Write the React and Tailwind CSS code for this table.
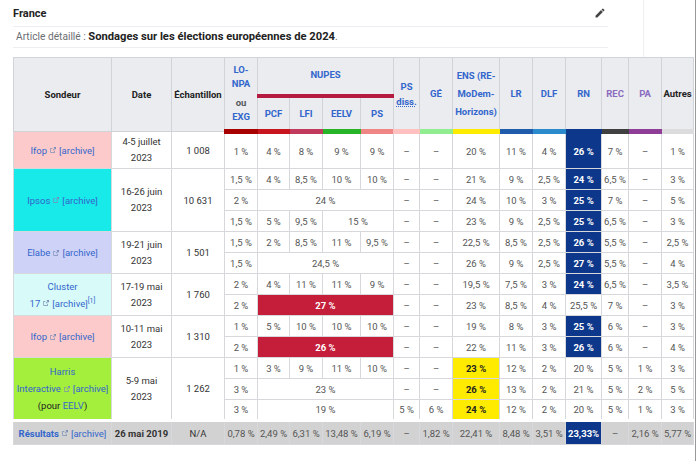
import React from 'react';

// Sondages européennes 2024 — tableau façon Wikipédia mobile

const widths = [98, 60, 53, 33, 32, 33, 38, 33, 26, 33, 47, 33, 33, 36, 27, 33, 32];

const kinds = {
    rn: 'bg-[#0d378a] text-white font-bold',
    nup: 'bg-[#c41e3a] text-white font-bold',
    ens: 'bg-[#ffeb00] text-[#222] font-bold',
};

function ExtIcon() {
    return (
        <svg viewBox="0 0 12 12" className="inline-block w-[8px] h-[8px] mx-[2px] align-[-0.5px] text-[#7a8db8]">
            <path d="M2 3h3v1H3v5h5V7h1v3H2z" fill="currentColor" />
            <path d="M6.5 1.5H10.5V5.5L9.2 4.2 6.5 6.9 5.6 6 8.3 3.3z" fill="currentColor" />
        </svg>
    );
}

function Source({ name, bold }) {
    return (
        <span className="whitespace-nowrap">
            <span className={bold ? 'font-bold text-[#3366cc]' : 'text-[#3366cc]'}>{name}</span>
            <ExtIcon />
            <span className="text-[#3366cc]">[archive]</span>
        </span>
    );
}

function Row({ vals }) {
    return vals.map((c, i) => {
        const o = typeof c === 'string' ? { v: c } : c;
        return (
            <td
                key={i}
                colSpan={o.span || 1}
                className={`border border-[#d6d8db] text-center px-[1px] whitespace-nowrap ${o.k ? kinds[o.k] : 'text-[#555]'}`}
            >
                {o.v}
            </td>
        );
    });
}

const polls = [
    {
        src: <Source name="Ifop" />,
        bg: 'bg-[#fccaca]',
        date: ['4-5 juillet', '2023'],
        n: '1 008',
        tall: true,
        rows: [['1 %', '4 %', '8 %', '9 %', '9 %', '–', '–', '20 %', '11 %', '4 %', { v: '26 %', k: 'rn' }, '7 %', '–', '1 %']],
    },
    {
        src: <Source name="Ipsos" />,
        bg: 'bg-[#18e9e9]',
        date: ['16-26 juin', '2023'],
        n: '10 631',
        rows: [
            ['1,5 %', '4 %', '8,5 %', '10 %', '10 %', '–', '–', '21 %', '9 %', '2,5 %', { v: '24 %', k: 'rn' }, '6,5 %', '–', '3 %'],
            ['2 %', { v: '24 %', span: 4 }, '–', '–', '24 %', '10 %', '3 %', { v: '25 %', k: 'rn' }, '7 %', '–', '5 %'],
            ['1,5 %', '5 %', '9,5 %', { v: '15 %', span: 2 }, '–', '–', '23 %', '9 %', '2,5 %', { v: '25 %', k: 'rn' }, '6,5 %', '–', '3 %'],
        ],
    },
    {
        src: <Source name="Elabe" />,
        bg: 'bg-[#cfd2f7]',
        date: ['19-21 juin', '2023'],
        n: '1 501',
        rows: [
            ['1,5 %', '2 %', '8,5 %', '11 %', '9,5 %', '–', '–', '22,5 %', '8,5 %', '2,5 %', { v: '26 %', k: 'rn' }, '5,5 %', '–', '2,5 %'],
            ['1,5 %', { v: '24,5 %', span: 4 }, '–', '–', '26 %', '9 %', '2,5 %', { v: '27 %', k: 'rn' }, '5,5 %', '–', '4 %'],
        ],
    },
    {
        src: (
            <>
                <span className="text-[#3366cc]">Cluster</span>
                <br />
                <span className="whitespace-nowrap">
                    <span className="text-[#3366cc]">17</span>
                    <ExtIcon />
                    <span className="text-[#3366cc]">[archive]</span>
                    <sup className="text-[7px] text-[#3366cc]">[1]</sup>
                </span>
            </>
        ),
        bg: 'bg-[#d8fbf9]',
        date: ['17-19 mai', '2023'],
        n: '1 760',
        rows: [
            ['2 %', '4 %', '11 %', '11 %', '9 %', '–', '–', '19,5 %', '7,5 %', '3 %', { v: '24 %', k: 'rn' }, '6,5 %', '–', '3,5 %'],
            ['2 %', { v: '27 %', span: 4, k: 'nup' }, '–', '–', '23 %', '8,5 %', '4 %', '25,5 %', '7 %', '–', '3 %'],
        ],
    },
    {
        src: <Source name="Ifop" />,
        bg: 'bg-[#fccaca]',
        date: ['10-11 mai', '2023'],
        n: '1 310',
        rows: [
            ['1 %', '5 %', '10 %', '10 %', '10 %', '–', '–', '19 %', '8 %', '3 %', { v: '25 %', k: 'rn' }, '6 %', '–', '3 %'],
            ['2 %', { v: '26 %', span: 4, k: 'nup' }, '–', '–', '22 %', '11 %', '3 %', { v: '26 %', k: 'rn' }, '6 %', '–', '4 %'],
        ],
    },
    {
        src: (
            <>
                <span className="text-[#3366cc]">Harris</span>
                <br />
                <span className="whitespace-nowrap">
                    <span className="text-[#3366cc]">Interactive</span>
                    <ExtIcon />
                    <span className="text-[#3366cc]">[archive]</span>
                </span>
                <br />
                (pour <span className="text-[#3366cc]">EELV</span>)
            </>
        ),
        bg: 'bg-[#a4ef3c]',
        date: ['5-9 mai', '2023'],
        n: '1 262',
        rows: [
            ['1 %', '3 %', '9 %', '11 %', '10 %', '–', '–', { v: '23 %', k: 'ens' }, '12 %', '2 %', '20 %', '5 %', '1 %', '3 %'],
            ['3 %', { v: '23 %', span: 4 }, '–', '–', { v: '26 %', k: 'ens' }, '13 %', '2 %', '21 %', '5 %', '2 %', '5 %'],
            ['3 %', { v: '19 %', span: 4 }, '5 %', '6 %', { v: '24 %', k: 'ens' }, '12 %', '2 %', '20 %', '5 %', '1 %', '3 %'],
        ],
    },
];

const results = ['0,78 %', '2,49 %', '6,31 %', '13,48 %', '6,19 %', '–', '1,82 %', '22,41 %', '8,48 %', '3,51 %', { v: '23,33%', k: 'rn' }, '–', '2,16 %', '5,77 %'];

const th = 'border border-[#d0d3d7] bg-[#eaecf0] font-bold px-[1px] text-center';

export default function App() {
    return (
        <div className="w-[696px] h-[461px] overflow-hidden bg-white border-r border-[#9a9a9a] font-['Roboto','Liberation_Sans',sans-serif] text-[#222] pl-[13px]">
            {/* --- entête section --- */}
            <div className="flex h-[57px]">
                <div className="w-[595px]">
                    <div className="h-[27px] border-b border-[#eceef1] flex items-center justify-between pt-[2px]">
                        <h2 className="text-[11px] font-bold leading-[14px]">France</h2>
                        <svg viewBox="0 0 24 24" className="w-[12px] h-[12px] mr-[2px] mb-[2px] text-[#444]">
                            <path fill="currentColor" d="M3 17.25V21h3.75L17.81 9.94l-3.75-3.75L3 17.25zM20.71 7.04a1 1 0 0 0 0-1.41l-2.34-2.34a1 1 0 0 0-1.41 0l-1.83 1.83 3.75 3.75 1.83-1.83z" />
                        </svg>
                    </div>
                    <div className="h-[21px] border-b border-[#eceef1] pl-[3px] text-[10.2px] leading-[20px] text-[#6a6e72]">
                        Article détaillé : <span className="font-bold text-[11.2px] text-[#222]">Sondages sur les élections européennes de 2024</span>.
                    </div>
                </div>
                <div className="w-[35px]" />
                <div className="border-l border-[#f0f0f0]" />
            </div>

            {/* --- tableau --- */}
            <table className="table-fixed border-collapse w-[680px] text-[9.5px] leading-[15px]">
                <colgroup>
                    {widths.map((w, i) => (
                        <col key={i} style={{ width: w }} />
                    ))}
                </colgroup>
                <thead>
                    <tr className="h-[38px]">
                        <th rowSpan={2} className={th}>Sondeur</th>
                        <th rowSpan={2} className={th}>Date</th>
                        <th rowSpan={2} className={th}>Échantillon</th>
                        <th rowSpan={2} className={`${th} border-b-[5px] border-b-[#a80000] leading-[14px]`}>
                            <div className="text-[#3366cc]">LO-<br />NPA</div>
                            <div className="mt-[5px] text-[#54595d]">ou</div>
                            <div className="text-[#3366cc]">EXG</div>
                        </th>
                        <th colSpan={4} className={`${th} border-b-[4px] border-b-[#b51a40] text-[#3366cc] pb-[3px]`}>NUPES</th>
                        <th rowSpan={2} className={`${th} border-b-[5px] border-b-[#ffc0c0] text-[#3366cc]`}>
                            PS<br />
                            <span className="underline decoration-dotted">diss.</span>
                        </th>
                        <th rowSpan={2} className={`${th} border-b-[5px] border-b-[#90ee90] text-[#3366cc]`}>GÉ</th>
                        <th rowSpan={2} className={`${th} border-b-[5px] border-b-[#ffeb00] text-[#3366cc] leading-[18px]`}>
                            ENS (RE-<br />MoDem-<br />Horizons)
                        </th>
                        <th rowSpan={2} className={`${th} border-b-[5px] border-b-[#1f5cab] text-[#3366cc]`}>LR</th>
                        <th rowSpan={2} className={`${th} border-b-[5px] border-b-[#2a8acb] text-[#3366cc]`}>DLF</th>
                        <th rowSpan={2} className={`${th} border-b-[5px] border-b-[#0d378a] text-[#3366cc]`}>RN</th>
                        <th rowSpan={2} className={`${th} border-b-[5px] border-b-[#404040] text-[#8a6bbf]`}>REC</th>
                        <th rowSpan={2} className={`${th} border-b-[5px] border-b-[#8e3e96] text-[#8a6bbf]`}>PA</th>
                        <th rowSpan={2} className={`${th} border-b-[5px] border-b-[#dcdcdc]`}>Autres</th>
                    </tr>
                    <tr className="h-[36px]">
                        <th className={`${th} border-b-[5px] border-b-[#c8141e] text-[#3366cc]`}>PCF</th>
                        <th className={`${th} border-b-[5px] border-b-[#c23a5e] text-[#3366cc]`}>LFI</th>
                        <th className={`${th} border-b-[5px] border-b-[#28b428] text-[#3366cc]`}>EELV</th>
                        <th className={`${th} border-b-[5px] border-b-[#f08585] text-[#3366cc]`}>PS</th>
                    </tr>
                </thead>
                <tbody>
                    {polls.map((p, pi) =>
                        p.rows.map((r, ri) => (
                            <tr key={`${pi}-${ri}`} className={p.tall ? 'h-[37px]' : 'h-[21px]'}>
                                {ri === 0 && (
                                    <>
                                        <td rowSpan={p.rows.length} className={`border border-[#d6d8db] text-center leading-[17px] px-[1px] ${p.bg}`}>
                                            {p.src}
                                        </td>
                                        <td rowSpan={p.rows.length} className="border border-[#d6d8db] text-center leading-[16px] text-[#333]">
                                            {p.date[0]}
                                            <br />
                                            {p.date[1]}
                                        </td>
                                        <td rowSpan={p.rows.length} className="border border-[#d6d8db] text-center text-[#333]">
                                            {p.n}
                                        </td>
                                    </>
                                )}
                                <Row vals={r} />
                            </tr>
                        ))
                    )}
                    <tr className="h-[24px] bg-[#d2d2d2] [&>td]:border-t-[3px] [&>td]:border-t-white">
                        <td className="border border-[#d6d8db] text-center whitespace-nowrap">
                            <Source name="Résultats" bold />
                        </td>
                        <td className="border border-[#d6d8db] text-center font-bold text-[#333] whitespace-nowrap">26 mai 2019</td>
                        <td className="border border-[#d6d8db] text-center text-[#333]">N/A</td>
                        <Row vals={results} />
                    </tr>
                </tbody>
            </table>
        </div>
    );
}
